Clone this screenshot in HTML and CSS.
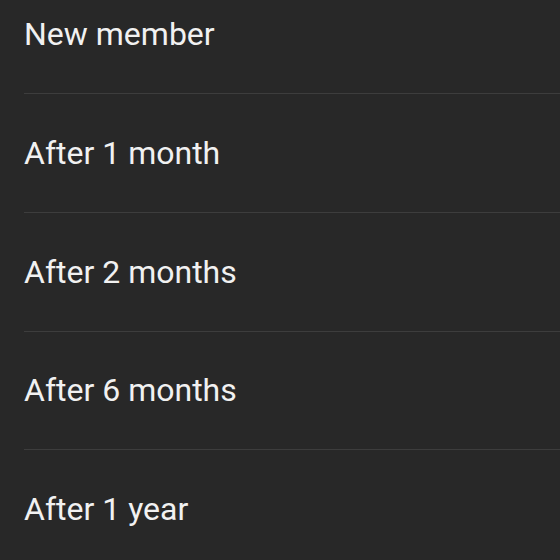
FILE: index.html
```html
<!DOCTYPE html>
<html>
<head>
<meta charset="utf-8">
<link rel="stylesheet" href="styles.css">
</head>
<body>
<ul class="list">
  <li class="row"><span class="label">New member</span></li>
  <li class="row"><span class="label">After 1 month</span></li>
  <li class="row"><span class="label">After 2 months</span></li>
  <li class="row"><span class="label">After 6 months</span></li>
  <li class="row"><span class="label">After 1 year</span></li>
</ul>
</body>
</html>
```
FILE: styles.css
```css
html, body {
  margin: 0;
  padding: 0;
  background: #282828;
  height: 100%;
  overflow: hidden;
}
.list {
  list-style: none;
  margin: -24.75px 0 0 24px;
  padding: 0;
}
.row {
  height: 117.75px;
  border-bottom: 1px solid #3d3d3d;
  display: flex;
  align-items: center;
}
.label {
  font-family: Roboto, "Liberation Sans", sans-serif;
  font-size: 32px;
  font-weight: 400;
  color: #f1f1f1;
}
```
